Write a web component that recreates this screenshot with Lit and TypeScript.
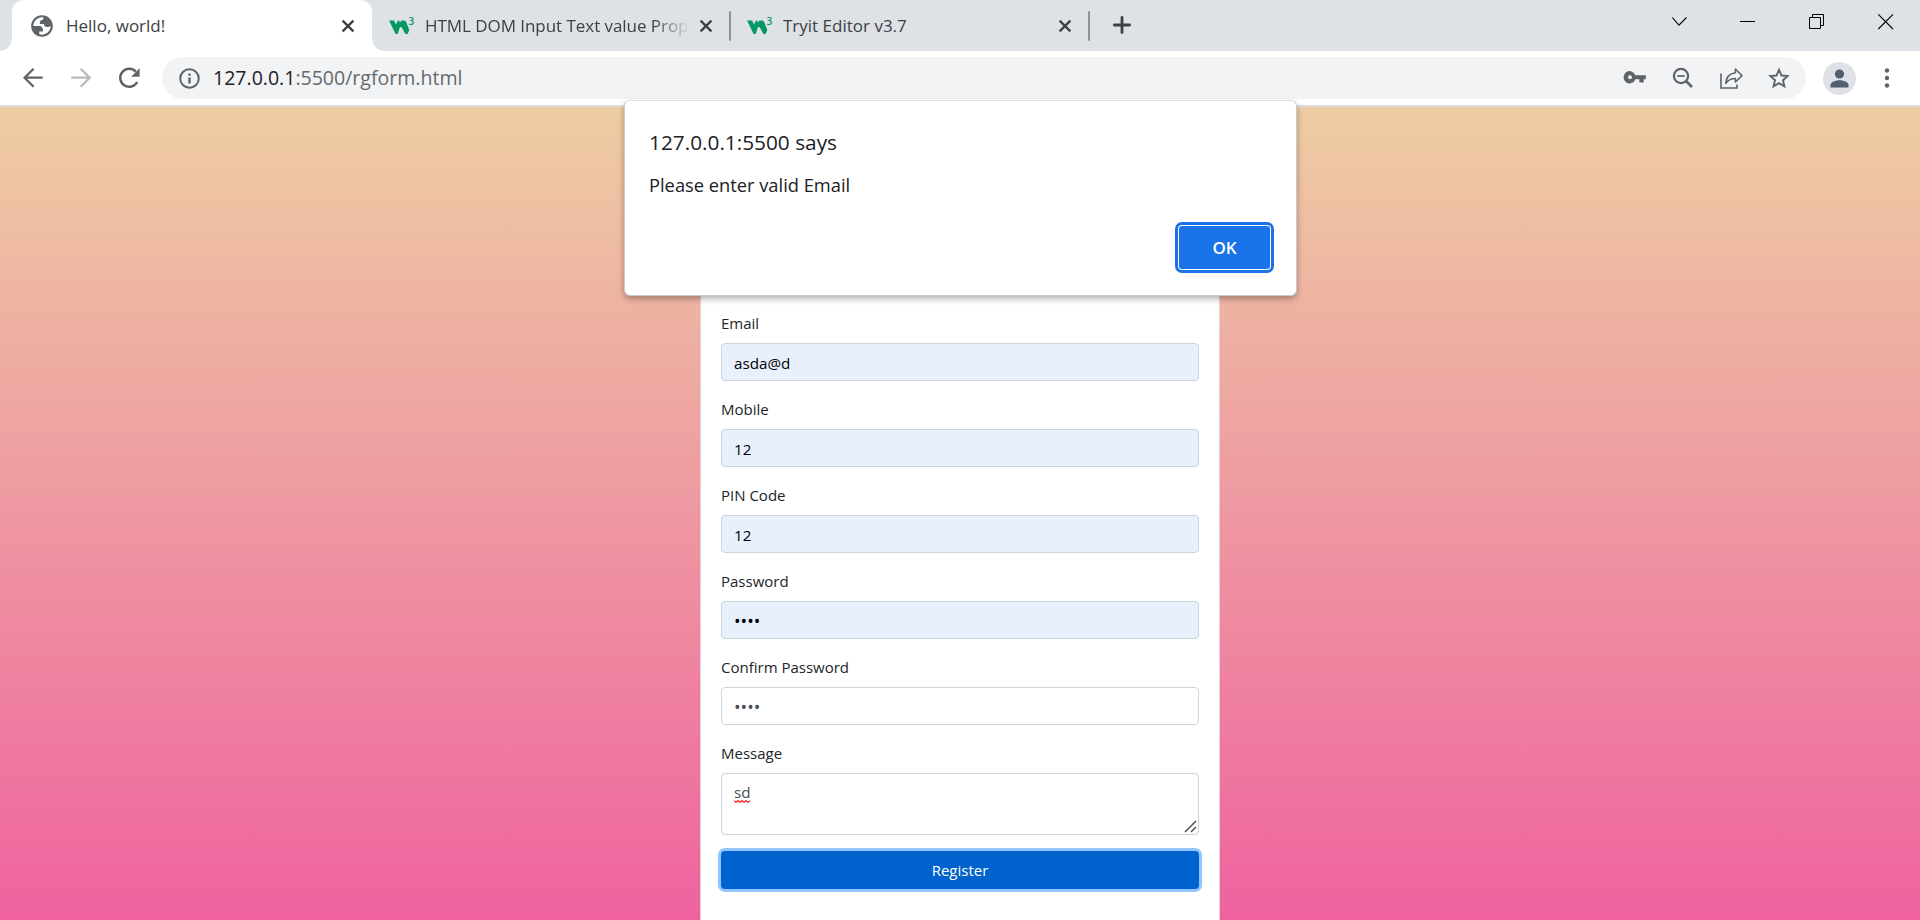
import { LitElement, html, css } from "lit";
import { customElement, property } from "lit/decorators.js";

const closeIcon = html`<svg width="14" height="14" viewBox="0 0 14 14">
  <path d="M1.6 1.6 12.4 12.4M12.4 1.6 1.6 12.4" stroke="#3c4043" stroke-width="2.3" fill="none" />
</svg>`;

const globeIcon = html`<svg width="26" height="26" viewBox="0 0 24 24">
  <path
    fill="#5f6368"
    fill-rule="evenodd"
    d="M12 2C6.48 2 2 6.48 2 12s4.48 10 10 10 10-4.48 10-10S17.52 2 12 2zM4 12h4.4c3.407.022 4.922 1.73 4.543 5.127H9.488v2.47a8.004 8.004 0 0 0 10.498-8.083C19.327 12.504 18.332 13 17 13c-2.137 0-3.206-.916-3.206-2.75h-3.748c-.274-2.728.683-4.092 2.87-4.092 0-.975.327-1.597.811-1.97A8.004 8.004 0 0 0 4 12z"
  />
</svg>`;

@customElement("w3-logo")
export class W3Logo extends LitElement {
  static styles = css`
    :host {
      display: flex;
      width: 25px;
      height: 18px;
      position: relative;
    }
    .three {
      position: absolute;
      left: 19.5px;
      top: 0;
      font: 600 10px/9px "Open Sans", sans-serif;
      color: #059862;
    }
  `;
  render() {
    return html`<svg width="21" height="18" viewBox="0 0 21 18">
        <path
          d="M0 3.500H5L7 7.500 9 3.500H10.200L10.800 5.500 12.500 3.500H15.700L17 4.500 20.300 13 18.600 17H16.400L12.700 10.200 11 10 8.700 17H6.600Z"
          fill="#059862"
        />
      </svg>
      <span class="three">3</span>`;
  }
}

@customElement("browser-tabs")
export class BrowserTabs extends LitElement {
  static styles = css`
    :host {
      display: flex;
      height: 51px;
      background: #dee1e6;
      color: #3c4043;
      font: 17px/51px "Open Sans", "Noto Sans", sans-serif;
      padding-left: 12px;
      box-sizing: border-box;
    }
    .tab {
      display: flex;
      align-items: center;
      box-sizing: border-box;
      height: 51px;
      position: relative;
    }
    .active {
      width: 360px;
      background: #fff;
      border-radius: 12px 12px 0 0;
      padding: 0 17px;
    }
    .active::before,
    .active::after {
      content: "";
      position: absolute;
      bottom: 0;
      width: 12px;
      height: 12px;
    }
    .active::before {
      left: -12px;
      background: radial-gradient(circle at 0 0, transparent 11.5px, #fff 12px);
    }
    .active::after {
      right: -12px;
      background: radial-gradient(circle at 100% 0, transparent 11.5px, #fff 12px);
    }
    .second {
      width: 357px;
      padding: 0 16px 0 17px;
    }
    .third {
      width: 357px;
      padding: 0 16px;
    }
    .name {
      flex: 1;
      min-width: 0;
      white-space: nowrap;
      overflow: hidden;
      margin-left: 11px;
    }
    .fade {
      letter-spacing: -0.05px;
      -webkit-mask-image: linear-gradient(90deg, #000 86%, transparent 100%);
      mask-image: linear-gradient(90deg, #000 86%, transparent 100%);
      margin-right: 9px;
    }
    .rule {
      width: 2px;
      height: 30px;
      margin-top: 11px;
      background: #909396;
      border-radius: 1px;
    }
    .plus {
      margin: 16px 0 0 23px;
    }
    .window {
      display: flex;
      margin-left: auto;
    }
    svg {
      flex: none;
      display: block;
    }
  `;
  render() {
    return html`
      <div class="tab active">
        ${globeIcon}<span class="name">Hello, world!</span>${closeIcon}
      </div>
      <div class="tab second">
        <w3-logo></w3-logo><span class="name fade">HTML DOM Input Text value Prop</span>${closeIcon}
      </div>
      <div class="rule"></div>
      <div class="tab third">
        <w3-logo></w3-logo><span class="name">Tryit Editor v3.7</span>${closeIcon}
      </div>
      <div class="rule"></div>
      <svg class="plus" width="18" height="18" viewBox="0 0 18 18">
        <path d="M9 1.400V16.600M1.400 9H16.600" stroke="#3c4043" stroke-width="2.800" stroke-linecap="round" />
      </svg>
      <div class="window">
        <svg width="249" height="51" viewBox="0 0 249 51" fill="none" stroke="#000">
          <path d="M1.3 17.5 8 25.2 15.5 17.5" stroke-width="1.1" />
          <path d="M69 21.5H84" />
          <path d="M138.500 17.500H149.500V28.500H138.500Z" />
          <path d="M141.500 17.500V14.500H152.500V25.500H149.500" />
          <path d="M207.300 14.300 222 29M222 14.300 207.300 29" stroke-width="1.1" />
        </svg>
      </div>
    `;
  }
}

@customElement("browser-toolbar")
export class BrowserToolbar extends LitElement {
  static styles = css`
    :host {
      display: flex;
      align-items: center;
      box-sizing: border-box;
      height: 56px;
      background: #fff;
      border-bottom: 2px solid #dadbdc;
      font: 19.55px/42px "Open Sans", "Noto Sans", sans-serif;
    }
    svg {
      display: block;
      flex: none;
    }
    .nav {
      width: 162px;
    }
    .omnibox {
      display: flex;
      align-items: center;
      box-sizing: border-box;
      width: 1644px;
      height: 42px;
      border-radius: 21px;
      background: #f1f3f4;
      padding-left: 17px;
    }
    .url {
      margin-left: 13px;
      color: #666a6e;
      flex: 1;
    }
    .host {
      color: #202124;
    }
  `;
  render() {
    return html`
      <svg class="nav" width="162" height="54" viewBox="0 51 162 54" fill="none" stroke-width="2.3">
        <path d="M42.700 77.700H25M33.600 68.700 24.600 77.700 33.600 86.700" stroke="#5f6368" />
        <path d="M71.300 77.700H89M80.700 68.700 89.700 77.700 80.700 86.700" stroke="#bababb" />
        <path d="M137.200 82A9 9 0 1 1 135.800 71.600" stroke="#5f6368" stroke-width="2.500" />
        <path d="M139.600 68.300V76.800H131.100Z" fill="#5f6368" />
      </svg>
      <div class="omnibox">
        <svg width="21" height="21" viewBox="0 0 21 21">
          <circle cx="10.500" cy="10.500" r="9.300" fill="none" stroke="#5f6368" stroke-width="2" />
          <path d="M9.300 5.500h2.400v2.300h-2.400zM9.300 9.400h2.400v6h-2.400z" fill="#5f6368" />
        </svg>
        <span class="url"><span class="host">127.0.0.1</span>:5500/rgform.html</span>
        <svg width="192" height="42" viewBox="1614 57 192 42" fill="none" stroke="#5f6368" stroke-width="2">
          <path
            d="M1635.400 75.200A6.100 6.100 0 1 0 1635.400 79.300H1639.400V82.600H1643.700V79.300H1645.800V75.200ZM1630 75.300A2 2 0 1 1 1630 79.300 2 2 0 0 1 1630 75.300Z"
            fill="#5f6368"
            fill-rule="evenodd"
            stroke="none"
          />
          <circle cx="1681" cy="76" r="7.100" stroke-width="2.200" />
          <path d="M1677.200 76H1684.800" stroke-width="1.700" />
          <path d="M1686 81 1692 87" stroke-width="2.600" />
          <path d="M1721 73.500V88H1737V84.500" stroke-width="1.600" />
          <path
            d="M1725.800 83.300C1726.300 76.500 1729.800 73.500 1735.400 72.700V69L1742 75.700 1735.400 82V78.500C1731.500 78.400 1728.500 79.800 1725.800 83.300Z"
            stroke-width="1.600"
            stroke-linejoin="round"
          />
          <path
            d="M1779 69.800 1781.500 75.500 1787.600 76.100 1783 80.200 1784.400 86.300 1779 83.100 1773.600 86.300 1775 80.200 1770.400 76.100 1776.500 75.500Z"
            stroke-width="1.900"
          />
        </svg>
      </div>
      <svg width="114" height="54" viewBox="1806 51 114 54">
        <circle cx="1839.500" cy="78.500" r="16.500" fill="#dee1e6" />
        <circle cx="1839.500" cy="74" r="4.600" fill="#525d72" />
        <path d="M1830.500 87.500V85.300C1830.500 81.700 1836 80.300 1839.500 80.300S1848.500 81.700 1848.500 85.300V87.500Z" fill="#525d72" />
        <g fill="#5f6368">
          <circle cx="1887" cy="70.500" r="2.200" />
          <circle cx="1887" cy="78" r="2.200" />
          <circle cx="1887" cy="85.500" r="2.200" />
        </g>
      </svg>
    `;
  }
}

type FieldKind = "text" | "password" | "area";

@customElement("form-field")
export class FormField extends LitElement {
  @property() label = "";
  @property() value = "";
  @property() kind: FieldKind = "text";
  @property({ type: Boolean }) filled = false;

  static styles = css`
    :host {
      display: flex;
      flex-direction: column;
      gap: 8px;
    }
    .label {
      height: 24px;
      font-size: 15px;
      line-height: 24px;
      color: #212529;
    }
    .box {
      position: relative;
      box-sizing: border-box;
      height: 38px;
      padding: 7px 12px 5px;
      border: 1px solid #ced4da;
      border-radius: 4px;
      background: #fff;
      color: #495057;
      font-size: 15.2px;
      line-height: 24px;
    }
    .filled {
      background: #e8f0fe;
      color: #000;
    }
    .password {
      font-size: 17.5px;
    }
    .area {
      height: 62px;
      padding-top: 6px;
    }
    .squiggle {
      position: absolute;
      left: 12px;
      top: 26px;
    }
    .grip {
      position: absolute;
      right: 1px;
      bottom: 1px;
    }
  `;

  render() {
    const shown = this.kind === "password" ? "•".repeat(this.value.length) : this.value;
    return html`
      <div class="label">${this.label}</div>
      <div class="box ${this.kind} ${this.filled ? "filled" : ""}">
        ${shown}
        ${this.kind === "area"
          ? html`<svg class="squiggle" width="17" height="3" viewBox="0 0 17 3">
                <path
                  d="M0 .6 2 2.300 4 .6 6 2.300 8 .6 10 2.300 12 .6 14 2.300 16 .6"
                  fill="none"
                  stroke="#f00"
                  stroke-width="1.100"
                />
              </svg>
              <svg class="grip" width="13" height="13" viewBox="0 0 13 13">
                <path d="M1 12 12 1M7 12 12 7" stroke="#505050" stroke-width="1.500" />
              </svg>`
          : ""}
      </div>
    `;
  }
}

@customElement("alert-dialog")
export class AlertDialog extends LitElement {
  static styles = css`
    :host {
      display: flex;
      flex-direction: column;
      box-sizing: border-box;
      width: 673px;
      height: 196px;
      padding: 27px 22px 22px 24px;
      border: 1px solid #c9cacb;
      border-top-color: #dfe1e3;
      border-radius: 6px;
      background: #fff;
      box-shadow: 0 3px 6px rgba(0, 0, 0, 0.3);
      color: #202124;
    }
    .title {
      font-size: 20.8px;
      line-height: 28px;
    }
    .message {
      margin-top: 16px;
      font-size: 18.3px;
      line-height: 26px;
    }
    .ok {
      align-self: flex-end;
      margin-top: auto;
      box-sizing: border-box;
      width: 99px;
      height: 51px;
      border: 3px solid #1a73e8;
      border-radius: 7px;
      padding: 1px;
      background: #fff;
    }
    .face {
      border-radius: 3px;
      height: 43px;
      background: #1a73e8;
      color: #fff;
      font-size: 17px;
      font-weight: 600;
      line-height: 43px;
      text-align: center;
    }
  `;
  render() {
    return html`
      <div class="title">127.0.0.1:5500 says</div>
      <div class="message">Please enter valid Email</div>
      <div class="ok"><div class="face">OK</div></div>
    `;
  }
}

@customElement("app-root")
export class AppRoot extends LitElement {
  static styles = css`
    :host {
      display: flex;
      flex-direction: column;
      position: relative;
      width: 1920px;
      height: 920px;
      overflow: hidden;
      font-family: "Open Sans", "Noto Sans", sans-serif;
    }
    .page {
      flex: 1;
      display: flex;
      justify-content: center;
      background: linear-gradient(#eecda3, #ef629f);
    }
    .card {
      box-sizing: border-box;
      width: 520px;
      padding: 204px 20px 0;
      border: 1px solid #dbd5d9;
      border-width: 0 1px;
      background: #fff;
      display: flex;
      flex-direction: column;
      gap: 16px;
    }
    .register {
      height: 38px;
      border-radius: 4px;
      background: #0062cc;
      box-shadow: 0 0 0 3px #92c5ff;
      color: #fff;
      font-size: 15px;
      line-height: 38px;
      text-align: center;
    }
    .dialog {
      position: absolute;
      left: 624px;
      top: 100px;
    }
  `;
  render() {
    return html`
      <browser-tabs></browser-tabs>
      <browser-toolbar></browser-toolbar>
      <div class="page">
        <div class="card">
          <form-field label="Email" value="asda@d" filled></form-field>
          <form-field label="Mobile" value="12" filled></form-field>
          <form-field label="PIN Code" value="12" filled></form-field>
          <form-field label="Password" value="1234" kind="password" filled></form-field>
          <form-field label="Confirm Password" value="1234" kind="password"></form-field>
          <form-field label="Message" value="sd" kind="area"></form-field>
          <div class="register">Register</div>
        </div>
      </div>
      <alert-dialog class="dialog"></alert-dialog>
    `;
  }
}
